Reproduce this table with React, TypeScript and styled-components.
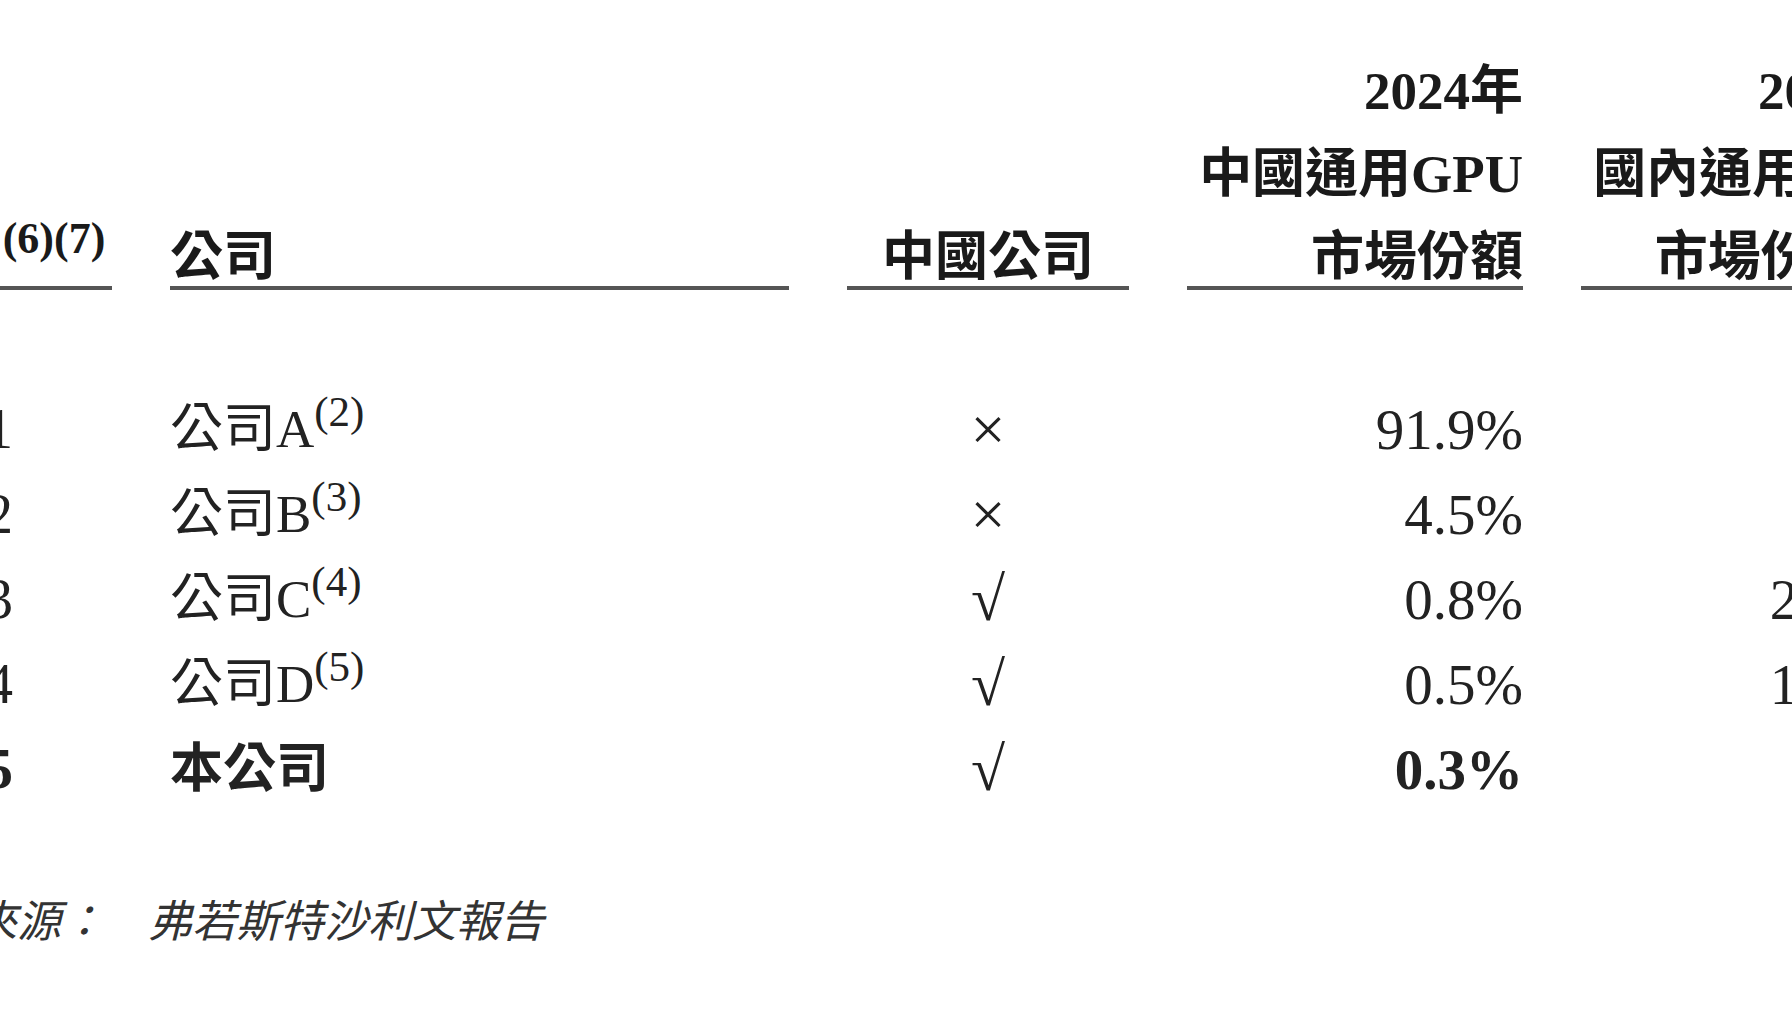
import React from 'react';
import styled, { createGlobalStyle } from 'styled-components';

type Align = 'left' | 'center' | 'right';

const GlobalStyle = createGlobalStyle`
  html, body {
    margin: 0;
    padding: 0;
    background: #ffffff;
    overflow: hidden;
  }
  body {
    width: 1792px;
    height: 1024px;
    font-family: "Liberation Serif", "Noto Sans CJK TC", serif;
    color: #1e1e1e;
  }
`;

const rows = [
  { rank: '1', name: '公司A', note: '(2)', china: '×', share: '91.9%', domestic: '–' },
  { rank: '2', name: '公司B', note: '(3)', china: '×', share: '4.5%', domestic: '–' },
  { rank: '3', name: '公司C', note: '(4)', china: '√', share: '0.8%', domestic: '24.2%' },
  { rank: '4', name: '公司D', note: '(5)', china: '√', share: '0.5%', domestic: '15.2%' },
  { rank: '5', name: '本公司', note: '', china: '√', share: '0.3%', domestic: '–', ours: true },
];

const App = () => {
  return (
    <>
      <GlobalStyle />
      <Page>
        <Table>
          <HeadCell $align="center">
            <HeadLine>
              排名<HeadSup>(6)(7)</HeadSup>
            </HeadLine>
          </HeadCell>
          <HeadCell $align="left">
            <HeadLine>公司</HeadLine>
          </HeadCell>
          <HeadCell $align="center">
            <HeadLine>中國公司</HeadLine>
          </HeadCell>
          <HeadCell $align="right">
            <HeadLine>2024年</HeadLine>
            <HeadLine>中國通用GPU</HeadLine>
            <HeadLine>市場份額</HeadLine>
          </HeadCell>
          <HeadCell $align="right">
            <HeadLine>2024年</HeadLine>
            <HeadLine>國內通用GPU</HeadLine>
            <HeadLine>
              市場份額<Sup>(8)</Sup>
            </HeadLine>
          </HeadCell>

          {rows.map((r) => (
            <React.Fragment key={r.rank}>
              <Cell $align="center" $size={56} $bold={r.ours}>
                {r.rank}
              </Cell>
              <Cell $align="left" $size={53} $bold={r.ours}>
                {r.name}
                {r.note && <Sup>{r.note}</Sup>}
              </Cell>
              <Cell $align="center" $size={62}>
                {r.china}
              </Cell>
              <Cell $align="right" $size={57} $bold={r.ours}>
                {r.share}
              </Cell>
              <Cell $align="right" $size={57} $bold={r.ours}>
                {r.domestic}
              </Cell>
            </React.Fragment>
          ))}
        </Table>

        <Source>
          <SourceLabel>來源：</SourceLabel>
          <span>弗若斯特沙利文報告</span>
        </Source>
      </Page>
    </>
  );
};

export default App;

const Page = styled.div`
  margin-left: -114px;
  padding-top: 62px;
  width: 2100px;
`;

const Table = styled.div`
  display: grid;
  grid-template-columns: 226px 619px 282px 336px 336px;
  column-gap: 58px;
`;

const HeadCell = styled.div<{ $align: Align }>`
  display: flex;
  flex-direction: column;
  justify-content: flex-end;
  align-items: ${(p) =>
    p.$align === 'left' ? 'flex-start' : p.$align === 'right' ? 'flex-end' : 'center'};
  gap: 25px;
  border-bottom: 4px solid #555555;
  margin-bottom: 97px;
`;

const HeadLine = styled.div`
  font-size: 53px;
  font-weight: 700;
  line-height: 58px;
  white-space: nowrap;
  color: #1a1a1a;
`;

const Cell = styled.div<{ $align: Align; $size: number; $bold?: boolean }>`
  height: 85px;
  line-height: 85px;
  font-size: ${(p) => p.$size}px;
  font-weight: ${(p) => (p.$bold ? 700 : 400)};
  text-align: ${(p) => p.$align};
  white-space: nowrap;
  color: #222222;
`;

const Sup = styled.span`
  font-size: 43px;
  line-height: 0;
  vertical-align: 0.5em;
`;

const HeadSup = styled(Sup)`
  margin-left: 4px;
  font-size: 44px;
`;

const Source = styled.div`
  display: flex;
  margin-top: 81px;
  padding-left: 87px;
  font-size: 44px;
  line-height: 60px;
  font-style: italic;
  color: #333333;
  white-space: nowrap;
`;

const SourceLabel = styled.span`
  width: 175px;
`;
